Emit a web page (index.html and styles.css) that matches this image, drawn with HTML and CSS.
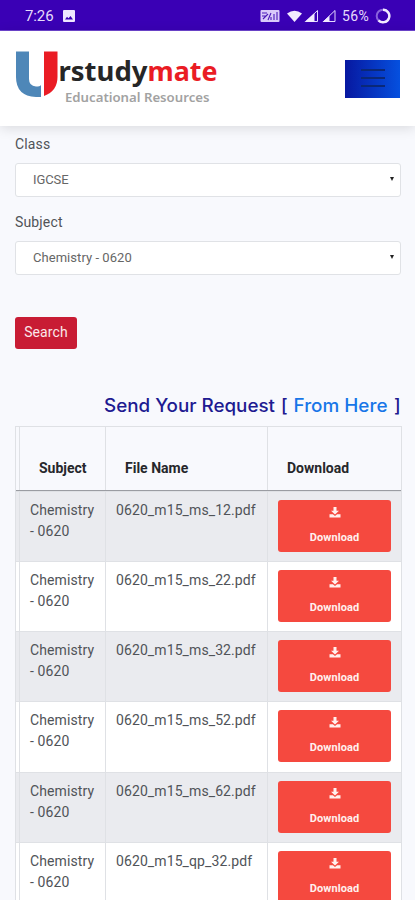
FILE: index.html
```html
<!DOCTYPE html>
<html lang="en">
<head>
<meta charset="utf-8">
<meta name="viewport" content="width=device-width, initial-scale=1">
<title>Urstudymate</title>
<link rel="stylesheet" href="styles.css">
</head>
<body>
<svg class="defs" width="0" height="0" aria-hidden="true">
  <symbol id="dl" viewBox="0 0 12 11"><path d="M4.500 0h3v3.800h2.500L6 7.600 2 3.800h2.500zM.5 7.300h3.400L6 9l2.100-1.700h3.400v3.200H.5z"/></symbol>
</svg>
<div class="status">
  <span class="time">7:26</span>
  <svg class="photo" width="12" height="12" viewBox="0 0 12 12"><path fill="#eee6ff" fill-rule="evenodd" d="M1 0h10a1 1 0 0 1 1 1v10a1 1 0 0 1-1 1H1a1 1 0 0 1-1-1V1a1 1 0 0 1 1-1zM2 9.500h8L7.500 6 5.500 8.300 4 6.800z"/></svg>
  <svg class="signals" width="77" height="14" viewBox="0 0 77 14">
    <rect x=".5" y="1" width="19" height="12" rx="1" fill="#d9c9fa"/>
    <path d="M2 4h5M2 7h4M3 10l5-5M8 11l3-7M11 11V8M14 11V5M17 11V3" stroke="#4a18b8" stroke-width="1.100" fill="none"/>
    <path d="M27 4.500Q34.500-1 42 4.500L34.500 13z" fill="#f1eaff"/>
    <path d="M57.500 1.500v11H46z" fill="none" stroke="#e4d9ff"/><path d="M54.500 4v9h-10z" fill="#f1eaff"/>
    <path d="M75 1.500v11H63.500z" fill="none" stroke="#e4d9ff"/><path d="M69.500 7v6H62.500z" fill="#f1eaff"/>
  </svg>
  <span class="percent">56%</span>
  <svg class="ring" width="16" height="16" viewBox="0 0 16 16"><circle cx="8" cy="8" r="6.300" fill="none" stroke="#8a63dc" stroke-width="2"/><path d="M8 1.700a6.300 6.300 0 1 1-4.500 10.700" fill="none" stroke="#f1eaff" stroke-width="2.400"/></svg>
</div>
<header class="header">
  <svg class="logo" width="206" height="60" viewBox="0 0 206 60">
    <path d="M1 3.500h13V31q0 7 7 7.500 4 0 5-1.500v12h-5Q1 48 1 29z" fill="#4e87b8"/>
    <path d="M29 3.500h13.500V29q0 14-13.500 19z" fill="#ea1c24"/>
    <text class="brand" x="43.500" y="33" textLength="89" lengthAdjust="spacingAndGlyphs">rstudy</text>
    <text class="brand brand-red" x="132.500" y="33" textLength="70" lengthAdjust="spacingAndGlyphs">mate</text>
    <text class="tagline" x="50" y="54" textLength="144.500" lengthAdjust="spacingAndGlyphs">Educational Resources</text>
  </svg>
  <div class="menu"><i></i><i></i><i></i></div>
</header>
<main class="main">
  <div class="label">Class</div>
  <div class="select"><span class="igcse">IGCSE</span><i class="caret"></i></div>
  <div class="label second">Subject</div>
  <div class="select"><span>Chemistry - 0620</span><i class="caret"></i></div>
  <div class="search">Search</div>
  <h2 class="request"><svg width="298" height="30" viewBox="0 0 298 30"><text x="0" y="21" textLength="171" lengthAdjust="spacingAndGlyphs">Send Your Request</text><text x="177" y="21">[</text><text class="link" x="189.500" y="21" textLength="94" lengthAdjust="spacingAndGlyphs">From Here</text><text x="290" y="21">]</text></svg></h2>
  <div class="table">
    <div class="row head"><div></div><div>Subject</div><div>File Name</div><div>Download</div></div>
    <div class="row"><div></div><div>Chemistry<br>- 0620</div><div>0620_m15_ms_12.pdf</div><div><a class="btn"><svg><use href="#dl"/></svg><span>Download</span></a></div></div>
    <div class="row"><div></div><div>Chemistry<br>- 0620</div><div>0620_m15_ms_22.pdf</div><div><a class="btn"><svg><use href="#dl"/></svg><span>Download</span></a></div></div>
    <div class="row"><div></div><div>Chemistry<br>- 0620</div><div>0620_m15_ms_32.pdf</div><div><a class="btn"><svg><use href="#dl"/></svg><span>Download</span></a></div></div>
    <div class="row"><div></div><div>Chemistry<br>- 0620</div><div>0620_m15_ms_52.pdf</div><div><a class="btn"><svg><use href="#dl"/></svg><span>Download</span></a></div></div>
    <div class="row"><div></div><div>Chemistry<br>- 0620</div><div>0620_m15_ms_62.pdf</div><div><a class="btn"><svg><use href="#dl"/></svg><span>Download</span></a></div></div>
    <div class="row"><div></div><div>Chemistry<br>- 0620</div><div>0620_m15_qp_32.pdf</div><div><a class="btn"><svg><use href="#dl"/></svg><span>Download</span></a></div></div>
  </div>
</main>
</body>
</html>
```

FILE: styles.css
```css
* { box-sizing: border-box; }
html, body { height: 900px; overflow: hidden; }
body { margin: 0; background: #f8f9fd; color: #505358; font-family: Roboto, sans-serif; font-size: 14px; }
svg { display: block; }
.defs { display: none; }
.status { height: 31px; background: #3a00b5; border-bottom: 1px solid #6e45cf; display: flex; align-items: center; color: #e6dcfb; padding: 1px 23px 0 25px; }
.time { font-size: 15px; letter-spacing: -.1px; width: 38px; }
.signals { margin-left: auto; margin-right: -1px; }
.percent { font-size: 14px; letter-spacing: .4px; margin-left: 6px; width: 33px; }
.ring { margin-right: 1px; }
.header { height: 95px; background: #fff; display: flex; justify-content: space-between; padding: 17px 15px 0; box-shadow: 0 2px 12px rgba(0, 0, 0, .13); }
.brand { font: bold 27px "Noto Sans", sans-serif; fill: #262626; }
.brand-red { fill: #ea1c24; }
.tagline { font: 600 12px "Noto Sans", sans-serif; fill: #a2a2a2; }
.menu { width: 55px; height: 38px; margin-top: 12px; background: linear-gradient(90deg, #0718a0, #0550df); display: flex; flex-direction: column; gap: 6px; padding: 9px 15px 0 16px; }
.menu i { height: 2px; background: #0a2878; }
.main { padding: 9px 14px 0 15px; }
.label { height: 28px; line-height: 19px; letter-spacing: .15px; }
.second { margin-top: 16px; }
.select { height: 34px; width: 386px; border: 1px solid #e0e2e6; border-radius: 3px; background: #fff; display: flex; align-items: center; justify-content: space-between; padding: 0 6px 2px 17px; font-size: 13px; color: #666; letter-spacing: .05px; }
.igcse { letter-spacing: -.1px; }
.caret { border: 2.500px solid transparent; border-top: 4px solid #222; border-bottom: 0; }
.search { width: 62px; height: 32px; margin-top: 42px; border-radius: 3px; background: #c81c34; color: #fbe8ea; line-height: 31px; text-align: center; letter-spacing: .1px; }
.request { margin: 42px 0 0 89px; height: 34.500px; font: 500 18px Inter, sans-serif; fill: #201a91; }
.link { fill: #1876e8; }
.table { width: 387px; border: 1px solid #dfe1e5; }
.row { display: grid; grid-template-columns: 4px 86px 162px 1fr; height: 70.300px; background: #fff; line-height: 21px; letter-spacing: .1px; border-top: 1px solid #dfe1e5; }
.row:nth-child(even) { background: #eaebef; }
.row > div { border-right: 1px solid #dfe1e5; padding: 8px 0 0 10px; }
.row > div:first-child { padding: 0; }
.row > div:last-child { border-right: 0; }
.head { height: 64px; background: #f8f9fd; border-top: 0; border-bottom: 1px solid #9a9ca2; font-weight: 700; color: #26272b; letter-spacing: 0; }
.head > div { padding: 31px 0 0 19px; }
.btn { display: flex; flex-direction: column; align-items: center; width: 113px; height: 52px; border-radius: 3px; background: #f5493f; color: #fff0ee; fill: #fff0ee; font-size: 11px; font-weight: 700; letter-spacing: .1px; padding-top: 7px; }
.btn svg { width: 12px; height: 11px; }
.btn span { margin-top: 10px; line-height: 20px; }
```
